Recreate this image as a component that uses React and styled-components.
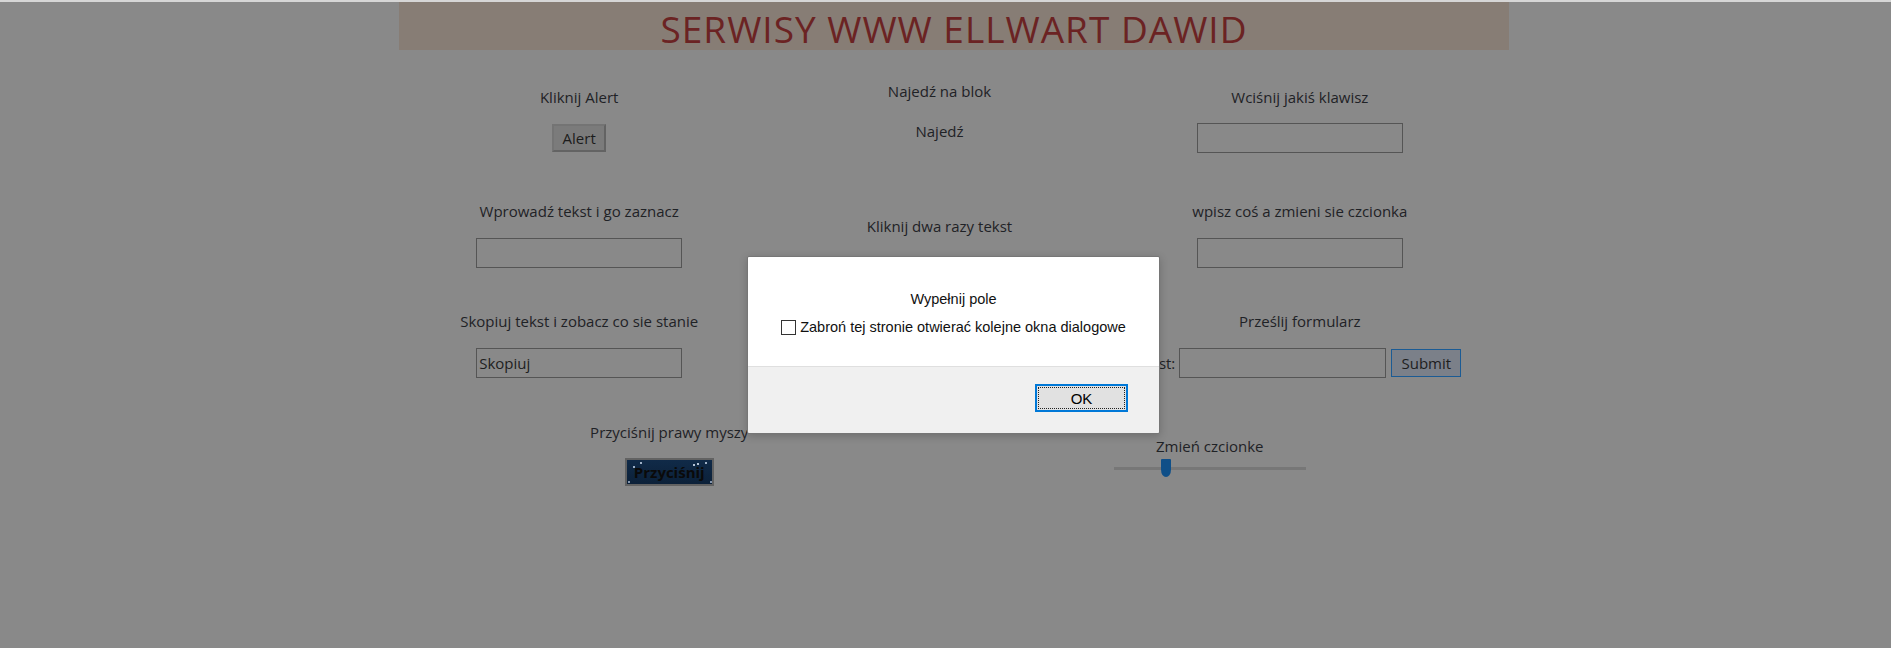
import React, { useState } from 'react';
import styled, { createGlobalStyle } from 'styled-components';

const GlobalStyle = createGlobalStyle`
  html, body {
    margin: 0;
    padding: 0;
  }
  body {
    background: #898989;
    border-top: 2px solid #d6d6d6;
    padding-left: 17px;
    height: 646px;
    overflow: hidden;
    font-family: "Open Sans", "Noto Sans", sans-serif;
    font-size: 15px;
    color: #1f2226;
  }
`;

const Page = styled.div`
  width: 1110px;
  margin: 0 auto;
`;

const Header = styled.header`
  height: 48px;
  box-sizing: border-box;
  padding-top: 8px;
  background: #877d75;
  text-align: center;
`;

const Title = styled.h1`
  margin: 0;
  font-size: 37px;
  line-height: 1;
  font-weight: 400;
  letter-spacing: 1px;
  color: #6b2323;
`;

const Row = styled.section`
  width: 1081px;
  display: grid;
  grid-template-columns: repeat(${p => p.$cols || 3}, 1fr);
  align-items: start;
  margin-top: ${p => p.$mt}px;
`;

const Cell = styled.div`
  display: flex;
  flex-direction: column;
  align-items: center;
  margin-top: ${p => p.$offset || 0}px;
`;

const Label = styled.div`
  line-height: 22px;
  white-space: nowrap;
  margin-bottom: ${p => (p.$gap === undefined ? 16 : p.$gap)}px;
`;

const HoverText = styled.div`
  line-height: 22px;
`;

const AlertButton = styled.button`
  width: 54px;
  height: 28px;
  padding: 0;
  font: inherit;
  color: #1c1c1c;
  background: #7b7b7b;
  border: 2px solid #696969;
  border-color: #747474 #636363 #636363 #747474;
`;

const TextInput = styled.input`
  width: ${p => p.$w || 206}px;
  height: 30px;
  box-sizing: border-box;
  margin: 0;
  padding: 0 2px;
  font: inherit;
  color: #1e1e1e;
  background: transparent;
  border: 1px solid #555555;
  outline: none;
`;

const FormRow = styled.form`
  display: flex;
  align-items: center;
  gap: 4px;
  margin-right: 4px;
`;

const FormLabel = styled.label`
  line-height: 22px;
`;

const SubmitButton = styled.button`
  width: 70px;
  height: 28px;
  margin-left: 1px;
  padding: 0;
  font: inherit;
  color: #1e1e1e;
  background: #7b8089;
  border: 1px solid #1b5b94;
`;

const StarButton = styled.button`
  width: 89px;
  height: 28px;
  padding: 0;
  font-family: "Open Sans", sans-serif;
  font-size: 15px;
  font-weight: 700;
  color: #0a0a0a;
  border: 2px solid #626262;
  background:
    radial-gradient(circle at 7px 7px, #9fb0c6 0 0.8px, transparent 1.3px),
    radial-gradient(circle at 14px 3px, #9fb0c6 0 0.8px, transparent 1.3px),
    radial-gradient(circle at 67px 5px, #b4c2d4 0 1px, transparent 1.5px),
    radial-gradient(circle at 71px 4px, #b4c2d4 0 0.8px, transparent 1.3px),
    radial-gradient(circle at 79px 3px, #9fb0c6 0 0.8px, transparent 1.3px),
    radial-gradient(circle at 84px 22px, #8496ae 0 0.8px, transparent 1.3px),
    radial-gradient(circle at 2px 22px, #8496ae 0 0.8px, transparent 1.3px),
    linear-gradient(180deg, #102a48 0%, #0c2139 100%);
`;

const Range = styled.input`
  -webkit-appearance: none;
  appearance: none;
  width: 192px;
  height: 18px;
  margin: 2px 0 0;
  background: transparent;

  &::-webkit-slider-runnable-track {
    height: 3px;
    background: #777777;
  }
  &::-webkit-slider-thumb {
    -webkit-appearance: none;
    width: 10px;
    height: 18px;
    margin-top: -8px;
    background: #0f4f88;
    border: none;
    border-radius: 1px 1px 50% 50% / 1px 1px 40% 40%;
  }
`;

const Dialog = styled.div`
  position: fixed;
  top: 256px;
  left: 747px;
  width: 413px;
  height: 178px;
  box-sizing: border-box;
  border: 1px solid #767676;
  border-radius: 2px;
  overflow: hidden;
  box-shadow: 0 2px 8px rgba(0, 0, 0, 0.2);
  font-family: "Liberation Sans", Arial, sans-serif;
  font-size: 14.5px;
  color: #111111;
  display: flex;
  flex-direction: column;
`;

const DialogBody = styled.div`
  height: 109px;
  box-sizing: border-box;
  padding-top: 34px;
  background: #ffffff;
  display: flex;
  flex-direction: column;
  align-items: center;
`;

const Message = styled.div`
  line-height: 17px;
`;

const CheckRow = styled.label`
  margin-top: 11px;
  display: flex;
  align-items: center;
  gap: 4px;
  line-height: 17px;
`;

const CheckBox = styled.input`
  -webkit-appearance: none;
  appearance: none;
  width: 15px;
  height: 15px;
  margin: 0;
  box-sizing: border-box;
  border: 1px solid #333333;
  background: #ffffff;
`;

const DialogFooter = styled.div`
  flex: 1;
  border-top: 1px solid #dfdfdf;
  background: #f0f0f0;
  display: flex;
  justify-content: flex-end;
  align-items: flex-start;
  padding: 17px 31px 0 0;
`;

const OkButton = styled.button`
  width: 93px;
  height: 28px;
  padding: 0;
  font-family: "Liberation Sans", Arial, sans-serif;
  font-size: 15px;
  color: #000000;
  background: #e1e1e1;
  border: 2px solid #0078d7;
  outline: 1px dotted #222222;
  outline-offset: -4px;
`;

export default function App() {
  const [font, setFont] = useState(26);
  const [blocked, setBlocked] = useState(false);

  return (
    <>
      <GlobalStyle />
      <Page>
        <Header>
          <Title>SERWISY WWW ELLWART DAWID</Title>
        </Header>

        <Row $mt={36}>
          <Cell>
            <Label>Kliknij Alert</Label>
            <AlertButton type="button">Alert</AlertButton>
          </Cell>
          <Cell $offset={-6}>
            <Label $gap={18}>Najedź na blok</Label>
            <HoverText>Najedź</HoverText>
          </Cell>
          <Cell>
            <Label $gap={15}>Wciśnij jakiś klawisz</Label>
            <TextInput type="text" />
          </Cell>
        </Row>

        <Row $mt={47}>
          <Cell>
            <Label>Wprowadź tekst i go zaznacz</Label>
            <TextInput type="text" />
          </Cell>
          <Cell $offset={15}>
            <Label>Kliknij dwa razy tekst</Label>
          </Cell>
          <Cell>
            <Label>wpisz coś a zmieni sie czcionka</Label>
            <TextInput type="text" />
          </Cell>
        </Row>

        <Row $mt={42}>
          <Cell>
            <Label>Skopiuj tekst i zobacz co sie stanie</Label>
            <TextInput type="text" defaultValue="Skopiuj" />
          </Cell>
          <Cell />
          <Cell>
            <Label>Prześlij formularz</Label>
            <FormRow onSubmit={e => e.preventDefault()}>
              <FormLabel>Tekst:</FormLabel>
              <TextInput type="text" $w={207} />
              <SubmitButton type="submit">Submit</SubmitButton>
            </FormRow>
          </Cell>
        </Row>

        <Row $cols={2} $mt={43}>
          <Cell>
            <Label $gap={15}>Przyciśnij prawy myszy</Label>
            <StarButton type="button">Przyciśnij</StarButton>
          </Cell>
          <Cell $offset={14}>
            <Label $gap={0}>Zmień czcionke</Label>
            <Range
              type="range"
              min={0}
              max={100}
              value={font}
              onChange={e => setFont(Number(e.target.value))}
            />
          </Cell>
        </Row>
      </Page>

      <Dialog role="dialog">
        <DialogBody>
          <Message>Wypełnij pole</Message>
          <CheckRow>
            <CheckBox
              type="checkbox"
              checked={blocked}
              onChange={e => setBlocked(e.target.checked)}
            />
            Zabroń tej stronie otwierać kolejne okna dialogowe
          </CheckRow>
        </DialogBody>
        <DialogFooter>
          <OkButton type="button">OK</OkButton>
        </DialogFooter>
      </Dialog>
    </>
  );
}
